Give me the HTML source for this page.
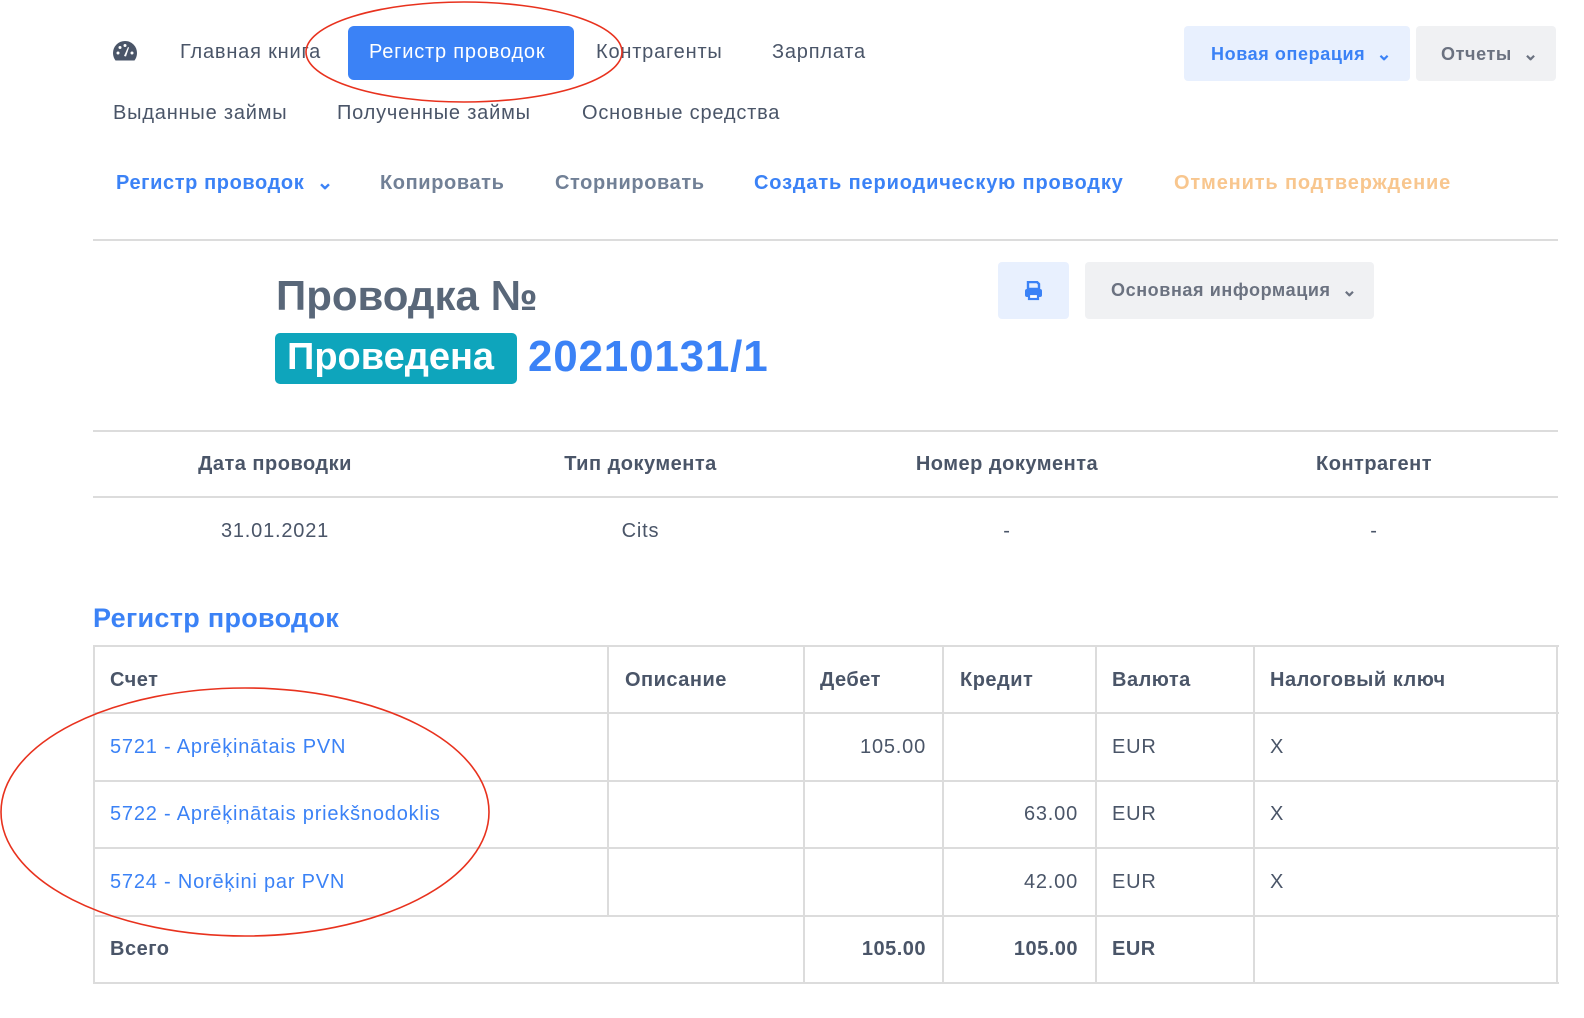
<!DOCTYPE html>
<html><head><meta charset="utf-8"><style>
*{margin:0;padding:0;box-sizing:border-box}
body{width:1584px;height:1018px;background:#fff;font-family:"Liberation Sans",sans-serif;color:#4a5568;position:relative;overflow:hidden}
.a{position:absolute;white-space:nowrap;line-height:1}
.n{font-size:20px;color:#4a5568;letter-spacing:0.8px}
.s{font-size:20px;font-weight:bold;letter-spacing:0.6px}
.hl{position:absolute;height:2px;background:#dcdcdc}
.vl{position:absolute;width:2px;background:#dcdcdc}
.th{font-size:20px;font-weight:bold;color:#4a5568;letter-spacing:0.5px}
.td{font-size:20px;color:#4a5568;letter-spacing:0.8px}
.blue{color:#3b82f6}
</style></head><body>
<svg class="a" style="left:112px;top:40px" width="26" height="22" viewBox="0 0 26 22"><path d="M13 1A12 12 0 0 0 1 13c0 3 1 5.5 2.5 7.5h19C24 18.5 25 16 25 13A12 12 0 0 0 13 1z" fill="#4a5568"/><circle cx="6" cy="13" r="1.5" fill="#fff"/><circle cx="8" cy="7.5" r="1.5" fill="#fff"/><circle cx="13" cy="5.5" r="1.5" fill="#fff"/><circle cx="20" cy="13" r="1.5" fill="#fff"/><path d="M12 16l4-9 1 .5-3 9z" fill="#fff"/></svg>
<div class="a n" style="left:180px;top:42px">Главная книга</div>
<div class="a" style="left:348px;top:26px;width:226px;height:54px;background:#3b82f6;border-radius:6px"></div>
<div class="a n" style="left:369px;top:42px;color:#fff">Регистр проводок</div>
<div class="a n" style="left:596px;top:42px">Контрагенты</div>
<div class="a n" style="left:772px;top:42px">Зарплата</div>
<div class="a n" style="left:113px;top:103px">Выданные займы</div>
<div class="a n" style="left:337px;top:103px">Полученные займы</div>
<div class="a n" style="left:582px;top:103px">Основные средства</div>
<div class="a" style="left:1184px;top:26px;width:226px;height:55px;background:#e8f0fe;border-radius:4px"></div>
<div class="a s blue" style="left:1211px;top:45px;font-size:18px">Новая операция &nbsp;⌄</div>
<div class="a" style="left:1416px;top:26px;width:140px;height:55px;background:#f0f1f3;border-radius:4px"></div>
<div class="a s" style="left:1441px;top:45px;font-size:18px;color:#6b7280">Отчеты &nbsp;⌄</div>

<div class="a s blue" style="left:116px;top:173px">Регистр проводок &nbsp;⌄</div>
<div class="a s" style="left:380px;top:173px;color:#718096">Копировать</div>
<div class="a s" style="left:555px;top:173px;color:#718096">Сторнировать</div>
<div class="a s blue" style="left:754px;top:173px;letter-spacing:0.85px">Создать периодическую проводку</div>
<div class="a s" style="left:1174px;top:173px;color:#f8c68e;letter-spacing:0.85px">Отменить подтверждение</div>
<div class="hl" style="left:93px;top:239px;width:1465px"></div>

<div class="a" style="left:276px;top:275px;font-size:42px;font-weight:bold;color:#596779">Проводка №</div>
<div class="a" style="left:275px;top:333px;width:242px;height:51px;background:#0ea5bc;border-radius:5px"></div>
<div class="a" style="left:287px;top:338px;font-size:38px;font-weight:bold;color:#fff">Проведена</div>
<div class="a" style="left:528px;top:335px;font-size:44px;font-weight:bold;color:#3b82f6;letter-spacing:0.8px">20210131/1</div>
<div class="a" style="left:998px;top:262px;width:71px;height:57px;background:#e8f0fe;border-radius:4px"></div>
<svg class="a" style="left:1024px;top:281px" width="19" height="20" viewBox="0 0 19 20"><path d="M4 1h9l2 2v5H4z" fill="none" stroke="#3b82f6" stroke-width="2.4"/><rect x="1" y="8" width="17" height="8" rx="2" fill="#3b82f6"/><rect x="5" y="13" width="9" height="5" fill="#fff" stroke="#3b82f6" stroke-width="2.2"/></svg>
<div class="a" style="left:1085px;top:262px;width:289px;height:57px;background:#f0f1f3;border-radius:4px"></div>
<div class="a s" style="left:1111px;top:281px;font-size:18px;color:#6b7280">Основная информация &nbsp;⌄</div>

<div class="hl" style="left:93px;top:430px;width:1465px"></div>
<div class="a th" style="left:93px;width:364px;text-align:center;top:454px">Дата проводки</div>
<div class="a th" style="left:457px;width:367px;text-align:center;top:454px">Тип документа</div>
<div class="a th" style="left:824px;width:366px;text-align:center;top:454px">Номер документа</div>
<div class="a th" style="left:1190px;width:368px;text-align:center;top:454px">Контрагент</div>
<div class="hl" style="left:93px;top:496px;width:1465px"></div>
<div class="a td" style="left:93px;width:364px;text-align:center;top:521px">31.01.2021</div>
<div class="a td" style="left:457px;width:367px;text-align:center;top:521px">Cits</div>
<div class="a td" style="left:824px;width:366px;text-align:center;top:521px">-</div>
<div class="a td" style="left:1190px;width:368px;text-align:center;top:521px">-</div>

<div class="a" style="left:93px;top:605px;font-size:27px;font-weight:bold;color:#3b82f6;letter-spacing:0.3px">Регистр проводок</div>

<div class="hl" style="left:93px;top:645px;width:1466px"></div>
<div class="hl" style="left:93px;top:712px;width:1466px"></div>
<div class="hl" style="left:93px;top:780px;width:1466px"></div>
<div class="hl" style="left:93px;top:847px;width:1466px"></div>
<div class="hl" style="left:93px;top:915px;width:1466px"></div>
<div class="hl" style="left:93px;top:982px;width:1466px"></div>
<div class="vl" style="left:93px;top:645px;height:339px"></div>
<div class="vl" style="left:607px;top:645px;height:272px"></div>
<div class="vl" style="left:803px;top:645px;height:339px"></div>
<div class="vl" style="left:942px;top:645px;height:339px"></div>
<div class="vl" style="left:1095px;top:645px;height:339px"></div>
<div class="vl" style="left:1253px;top:645px;height:339px"></div>
<div class="vl" style="left:1556px;top:645px;height:339px"></div>

<div class="a th" style="left:110px;top:670px">Счет</div>
<div class="a th" style="left:625px;top:670px">Описание</div>
<div class="a th" style="left:820px;top:670px">Дебет</div>
<div class="a th" style="left:960px;top:670px">Кредит</div>
<div class="a th" style="left:1112px;top:670px">Валюта</div>
<div class="a th" style="left:1270px;top:670px">Налоговый ключ</div>

<div class="a td blue" style="left:110px;top:737px">5721 - Aprēķinātais PVN</div>
<div class="a td" style="left:805px;width:121px;text-align:right;top:737px">105.00</div>
<div class="a td" style="left:1112px;top:737px">EUR</div>
<div class="a td" style="left:1270px;top:737px">X</div>

<div class="a td blue" style="left:110px;top:804px">5722 - Aprēķinātais priekšnodoklis</div>
<div class="a td" style="left:944px;width:134px;text-align:right;top:804px">63.00</div>
<div class="a td" style="left:1112px;top:804px">EUR</div>
<div class="a td" style="left:1270px;top:804px">X</div>

<div class="a td blue" style="left:110px;top:872px">5724 - Norēķini par PVN</div>
<div class="a td" style="left:944px;width:134px;text-align:right;top:872px">42.00</div>
<div class="a td" style="left:1112px;top:872px">EUR</div>
<div class="a td" style="left:1270px;top:872px">X</div>

<div class="a th" style="left:110px;top:939px">Всего</div>
<div class="a th" style="left:805px;width:121px;text-align:right;top:939px">105.00</div>
<div class="a th" style="left:944px;width:134px;text-align:right;top:939px">105.00</div>
<div class="a th" style="left:1112px;top:939px">EUR</div>

<svg class="a" style="left:0;top:0" width="1584" height="1018"><ellipse cx="464" cy="52" rx="158" ry="50" fill="none" stroke="#e8321e" stroke-width="1.6"/><ellipse cx="245" cy="812" rx="244" ry="124" fill="none" stroke="#e8321e" stroke-width="1.6"/></svg>
</body></html>
